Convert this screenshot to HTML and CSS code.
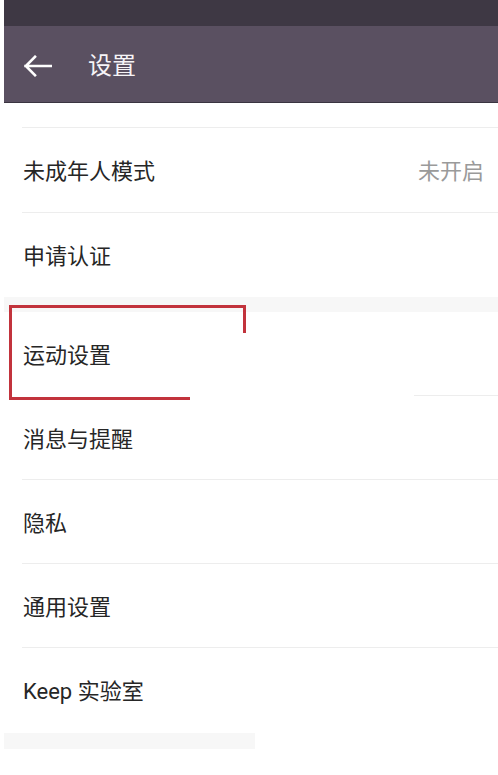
FILE: index.html
```html
<!DOCTYPE html>
<html lang="zh-CN">
<head>
<meta charset="utf-8">
<title>设置</title>
<link rel="stylesheet" href="styles.css">
</head>
<body>
<div class="app">
  <div class="statusbar"></div>
  <header class="header">
    <svg class="back" width="28" height="22" viewBox="0 0 28 22">
      <path d="M1.5 11 H27 M11 1.8 L1.8 11 L11 20.2" fill="none" stroke="#ffffff" stroke-width="2.6" stroke-linecap="square" stroke-linejoin="miter"/>
    </svg>
    <h1 class="title">设置</h1>
  </header>
  <div class="top-spacer"></div>
  <section class="group group-a">
    <div class="row"><span class="label">未成年人模式</span><span class="value">未开启</span></div>
    <div class="row row-last"><span class="label">申请认证</span></div>
  </section>
  <div class="gap"></div>
  <section class="group group-b">
    <div class="row row-cut"><span class="label">运动设置</span></div>
    <div class="row"><span class="label">消息与提醒</span></div>
    <div class="row"><span class="label">隐私</span></div>
    <div class="row"><span class="label">通用设置</span></div>
    <div class="row row-last"><span class="label">Keep 实验室</span></div>
  </section>
  <div class="gap gap-short"></div>
  <svg class="annotation" width="240" height="100" viewBox="0 0 240 100">
    <polyline points="181,93.5 1.5,93.5 1.5,1.5 235.5,1.5 235.5,28" fill="none" stroke="#c2333c" stroke-width="3"/>
  </svg>
</div>
</body>
</html>
```

FILE: styles.css
```css
html, body {
  margin: 0;
  padding: 0;
  background: #ffffff;
}
body {
  font-family: Roboto, "Noto Sans CJK SC", "Noto Sans", sans-serif;
  width: 498px;
  height: 775px;
  overflow: hidden;
}
.app {
  position: relative;
  margin-left: 4px;
}
.statusbar {
  height: 26px;
  background: #3e3844;
}
.header {
  height: 76px;
  background: #5a5061;
  border-bottom: 1px solid #3a3440;
  display: flex;
  align-items: center;
  padding-left: 20px;
  padding-top: 3px;
  box-sizing: border-box;
  height: 77px;
}
.back {
  display: block;
}
.title {
  margin: 0 0 0 36px;
  font-size: 24px;
  font-weight: 400;
  color: #f6f4f7;
  line-height: 1;
}
.top-spacer {
  height: 24px;
  margin-left: 18px;
  border-bottom: 1px solid #ededed;
}
.row {
  height: 84px;
  margin-left: 18px;
  padding-left: 1px;
  padding-right: 14px;
  padding-top: 4px;
  border-bottom: 1px solid #ededed;
  display: flex;
  align-items: center;
  justify-content: space-between;
  box-sizing: border-box;
}
.group-a .row {
  height: 85px;
}
.group-a .row-last {
  height: 84px;
}
.row-last {
  border-bottom: none;
}
.row-cut {
  border-bottom: none;
  background: linear-gradient(to right, #ffffff 392px, #ededed 392px) bottom / 100% 1px no-repeat;
}
.label {
  font-size: 22px;
  color: #262626;
  line-height: 1;
}
.value {
  font-size: 22px;
  color: #9a9a9a;
  line-height: 1;
}
.gap {
  height: 15px;
  background: #f7f7f7;
}
.gap-short {
  width: 251px;
  height: 16px;
  margin-top: 1px;
}
.annotation {
  position: absolute;
  left: 5px;
  top: 305px;
  display: block;
}
```
